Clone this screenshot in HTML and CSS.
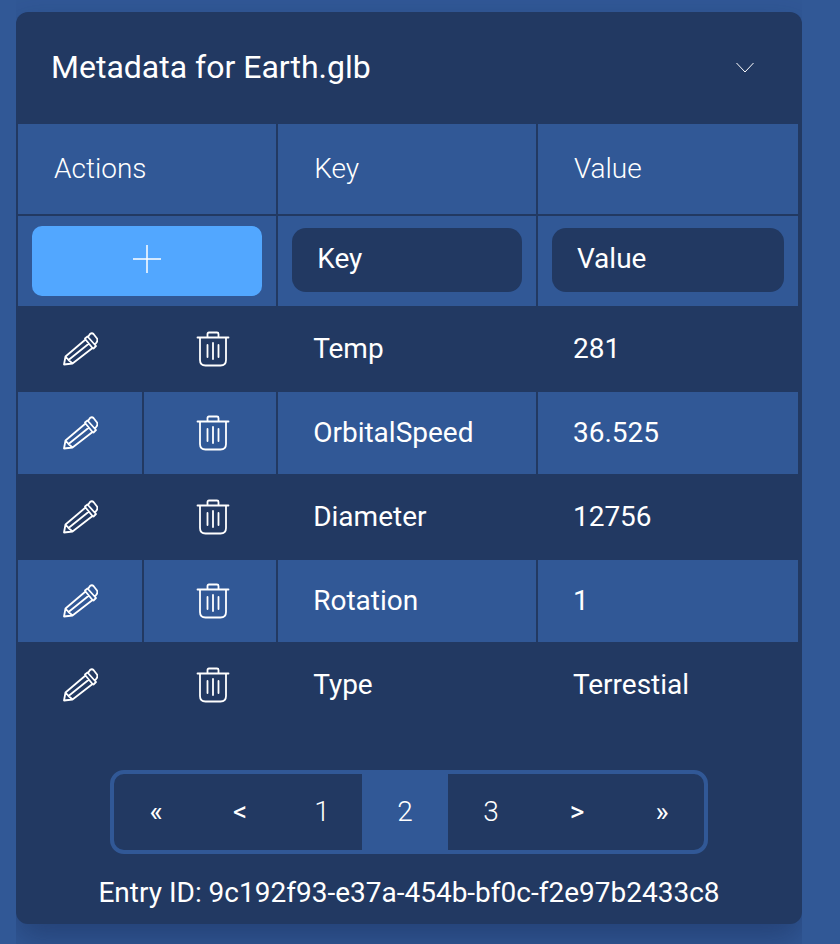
FILE: index.html
```html
<!DOCTYPE html>
<html lang="en">
<head>
<meta charset="utf-8">
<meta name="viewport" content="width=device-width, initial-scale=1">
<title>Metadata for Earth.glb</title>
<link rel="stylesheet" href="styles.css">
</head>
<body>
<svg class="sprite" aria-hidden="true">
  <symbol id="pencil" viewBox="0 0 36 36">
    <path d="M2 33.500 3.500 25.500 23.500 8.500 30.500 17 10.500 32.500Z M3.500 25.500 6.500 29 10.500 32.500 M6.500 29 27 12.500 M23.500 9.500 23 7.500 25.500 5.500 34 15 31.500 17.500 29.500 17 M26 6 28 3Q30 1.500 31.500 3L35 7.500Q36 9.500 34.500 11.500L33 13.500"/>
  </symbol>
  <symbol id="trash" viewBox="0 0 36 38">
    <path d="M2.500 6.500H33.500 M12.500 6V3Q12.500 1.500 14 1.500H22Q23.500 1.500 23.500 3V6 M5 7V29Q5 34.500 10.500 34.500H25.500Q31 34.500 31 29V7 M12.500 14V26 M18 12V28 M23.500 14V26"/>
  </symbol>
</svg>
<main class="wrap">
  <section class="card">
    <header class="card-header">
      <h1>Metadata for Earth.glb</h1>
      <button class="toggle" type="button" aria-label="Collapse">
        <svg width="18" height="12" viewBox="0 0 18 12"><path d="M.5 2 9 11 17.500 2"/></svg>
      </button>
    </header>
    <table class="meta">
      <colgroup><col class="col-edit"><col class="col-delete"><col class="col-key"><col></colgroup>
      <thead>
        <tr><th colspan="2" scope="col">Actions</th><th scope="col">Key</th><th scope="col">Value</th></tr>
      </thead>
      <tbody>
        <tr class="form-row">
          <td colspan="2"><button class="add" type="button" aria-label="Add entry"><svg width="28" height="28" viewBox="0 0 28 28"><path d="M14 0V28M0 14H28"/></svg></button></td>
          <td class="field"><input type="text" placeholder="Key" aria-label="Key"></td>
          <td class="field"><input type="text" placeholder="Value" aria-label="Value"></td>
        </tr>
        <tr class="entry">
          <td class="action"><button type="button" aria-label="Edit Temp"><svg class="icon-edit"><use href="#pencil"/></svg></button></td>
          <td class="action delete"><button type="button" aria-label="Delete Temp"><svg class="icon-delete"><use href="#trash"/></svg></button></td>
          <td>Temp</td><td>281</td>
        </tr>
        <tr class="entry">
          <td class="action"><button type="button" aria-label="Edit OrbitalSpeed"><svg class="icon-edit"><use href="#pencil"/></svg></button></td>
          <td class="action delete"><button type="button" aria-label="Delete OrbitalSpeed"><svg class="icon-delete"><use href="#trash"/></svg></button></td>
          <td>OrbitalSpeed</td><td>36.525</td>
        </tr>
        <tr class="entry">
          <td class="action"><button type="button" aria-label="Edit Diameter"><svg class="icon-edit"><use href="#pencil"/></svg></button></td>
          <td class="action delete"><button type="button" aria-label="Delete Diameter"><svg class="icon-delete"><use href="#trash"/></svg></button></td>
          <td>Diameter</td><td>12756</td>
        </tr>
        <tr class="entry">
          <td class="action"><button type="button" aria-label="Edit Rotation"><svg class="icon-edit"><use href="#pencil"/></svg></button></td>
          <td class="action delete"><button type="button" aria-label="Delete Rotation"><svg class="icon-delete"><use href="#trash"/></svg></button></td>
          <td>Rotation</td><td>1</td>
        </tr>
        <tr class="entry">
          <td class="action"><button type="button" aria-label="Edit Type"><svg class="icon-edit"><use href="#pencil"/></svg></button></td>
          <td class="action delete"><button type="button" aria-label="Delete Type"><svg class="icon-delete"><use href="#trash"/></svg></button></td>
          <td>Type</td><td>Terrestial</td>
        </tr>
      </tbody>
    </table>
    <nav class="pager" aria-label="Pages">
      <button type="button" class="step">«</button>
      <button type="button" class="step">&lt;</button>
      <button type="button">1</button>
      <button type="button" class="current" aria-current="page">2</button>
      <button type="button">3</button>
      <button type="button" class="step">&gt;</button>
      <button type="button" class="step">»</button>
    </nav>
    <p class="entry-id">Entry ID: 9c192f93-e37a-454b-bf0c-f2e97b2433c8</p>
  </section>
</main>
</body>
</html>
```
FILE: styles.css
```css
:root {
  --blue: #315896;
  --navy: #223962;
  --accent: #52a7ff;
}
* { box-sizing: border-box; }
body {
  margin: 0;
  background: var(--blue);
  color: #fff;
  font: 400 28px/36px Roboto, sans-serif;
}
button, input { font: inherit; color: inherit; border: 0; background: none; }
button { cursor: pointer; padding: 0; }
svg { fill: none; stroke: #fff; }
.sprite { display: none; }
.wrap {
  margin: 0 38px 0 16px;
  padding: 12px 0 20px;
  overflow-x: clip;
}
.card {
  background: var(--navy);
  border-radius: 12px;
  padding-bottom: 13px;
  box-shadow: 0 16px 32px rgba(20, 35, 75, .4);
}
.card-header {
  display: flex;
  align-items: center;
  justify-content: space-between;
  height: 110px;
  padding: 0 48px 0 35px;
}
h1 { margin: 0; font-size: 32px; font-weight: 400; line-height: 40px; }
.toggle { display: flex; }
.meta {
  width: calc(100% - 2px);
  table-layout: fixed;
  border-spacing: 2px;
}
.col-edit { width: 16%; }
.col-delete { width: 17.1%; }
.col-key { width: 33.3%; }
.meta th {
  height: 90px;
  padding: 0 36px;
  background: var(--blue);
  font-weight: 300;
  text-align: left;
}
.meta td { padding: 0 35px; }
.form-row td { height: 90px; padding: 10px 14px; background: var(--blue); vertical-align: top; }
.form-row .field { padding-top: 12px; }
.add {
  display: flex;
  justify-content: center;
  align-items: center;
  width: 100%;
  height: 70px;
  padding-bottom: 4px;
  border-radius: 10px;
  background: var(--accent);
}
.add svg { stroke-width: 1.5; }
.field input {
  display: block;
  width: 100%;
  height: 64px;
  padding: 0 25px 4px;
  border-radius: 14px;
  background: var(--navy);
}
.field input::placeholder { color: #fff; opacity: 1; }
.entry td { height: 82px; }
.entry:nth-child(odd) td { background: var(--blue); }
.meta .action { padding: 0; }
.meta .delete { padding: 2px 0 0 6px; }
.action button { display: flex; align-items: center; justify-content: center; width: 100%; height: 80px; }
.icon-edit { width: 36px; height: 36px; stroke-width: 1.8; stroke-linejoin: round; }
.icon-delete { width: 36px; height: 38px; stroke-width: 1.8; stroke-linecap: round; }
.pager {
  display: grid;
  grid-template-columns: 84fr 84fr 80fr 86fr 86fr 86fr 84fr;
  max-width: 598px;
  height: 84px;
  margin: 42px auto 21px;
  border: 4px solid var(--blue);
  border-radius: 14px;
  overflow: hidden;
}
.pager button { font-weight: 300; }
.pager .step { font-weight: 400; }
.pager .current { background: var(--blue); }
.entry-id { margin: 0; text-align: center; }
```
